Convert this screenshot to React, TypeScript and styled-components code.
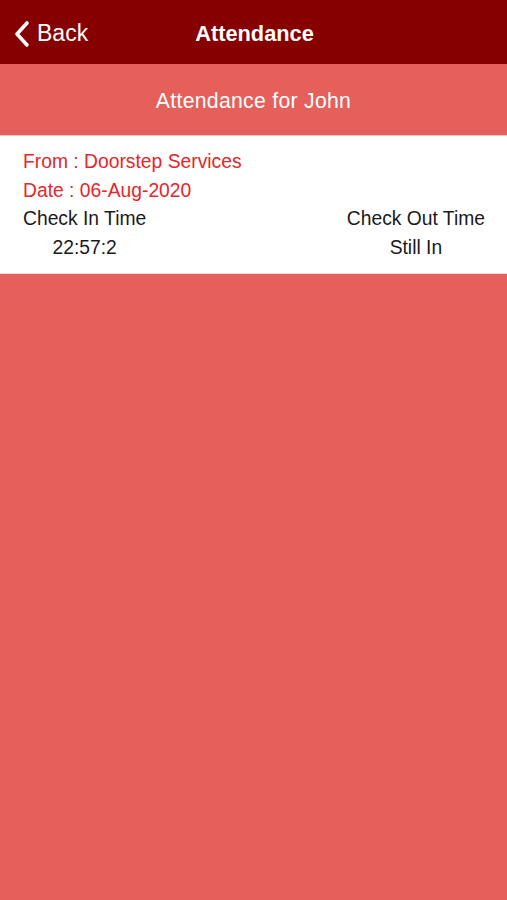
import styled, { createGlobalStyle } from "styled-components";

const GlobalStyle = createGlobalStyle`
  html, body {
    margin: 0;
    padding: 0;
    background: #e5605b;
  }
  body {
    font-family: "Liberation Sans", Arial, sans-serif;
  }
`;

const Page = styled.div`
  width: 507px;
  min-height: 900px;
  background: #e5605b;
  display: flex;
  flex-direction: column;
`;

const NavBar = styled.header`
  height: 64px;
  box-sizing: border-box;
  padding-top: 3px;
  background: #870000;
  display: flex;
  align-items: center;
  position: relative;
  color: #fff;
`;

const BackButton = styled.div`
  display: flex;
  align-items: center;
  gap: 6px;
  padding-left: 13px;
  font-size: 23px;
  color: #fff;
`;

const NavTitle = styled.div`
  position: absolute;
  left: 0;
  right: 0;
  padding-left: 2px;
  text-align: center;
  font-size: 21.8px;
  font-weight: 700;
  pointer-events: none;
`;

const SubHeader = styled.div`
  height: 72px;
  box-sizing: border-box;
  padding-top: 3px;
  display: flex;
  align-items: center;
  justify-content: center;
  color: #fff;
  font-size: 21.2px;
  letter-spacing: 0.3px;
  border-bottom: 1px solid #f3c9c7;
`;

const Card = styled.section`
  background: #fff;
  padding: 11px 22px 11px 23px;
  display: flex;
  flex-direction: column;
  border-bottom: 1px solid #ecdcdb;
`;

const InfoLine = styled.div`
  color: #e5262b;
  font-size: 19.3px;
  line-height: 29px;
`;

const Columns = styled.div`
  display: flex;
  justify-content: space-between;
`;

const Column = styled.div`
  display: flex;
  flex-direction: column;
  align-items: center;
  color: #1a1a1a;
  font-size: 19.3px;
  line-height: 28.5px;
`;

const App = () => {
  return (
    <>
      <GlobalStyle />
      <Page>
        <NavBar>
          <BackButton>
            <svg width="18" height="28" viewBox="0 0 18 28">
              <path
                d="M14 3 L4 14 L14 25"
                fill="none"
                stroke="#fff"
                strokeWidth="3.6"
                strokeLinecap="round"
                strokeLinejoin="round"
              />
            </svg>
            <span>Back</span>
          </BackButton>
          <NavTitle>Attendance</NavTitle>
        </NavBar>
        <SubHeader>Attendance for John</SubHeader>
        <Card>
          <InfoLine>From : Doorstep Services</InfoLine>
          <InfoLine>Date : 06-Aug-2020</InfoLine>
          <Columns>
            <Column>
              <span>Check In Time</span>
              <span>22:57:2</span>
            </Column>
            <Column>
              <span>Check Out Time</span>
              <span>Still In</span>
            </Column>
          </Columns>
        </Card>
      </Page>
    </>
  );
};

export default App;
